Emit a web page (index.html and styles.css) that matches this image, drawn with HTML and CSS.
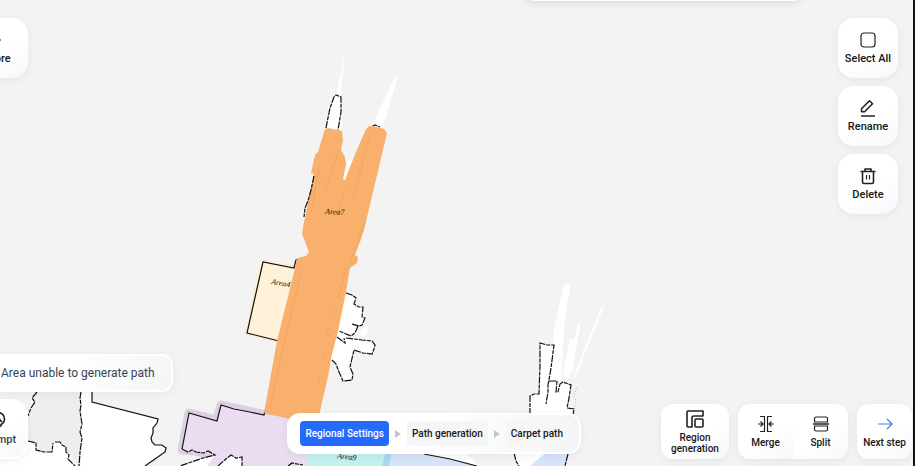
FILE: index.html
```
<!DOCTYPE html>
<html lang="en">
<head>
    <meta charset="UTF-8">
    <meta name="viewport" content="width=device-width, initial-scale=1.0">
    <title>Map Editor</title>
    <link rel="stylesheet" href="styles.css">
</head>
<body>
<div class="app">

    <!-- Scanned map -->
    <svg class="map" viewBox="0 0 913 466" preserveAspectRatio="xMinYMin slice" aria-hidden="true">
        <!-- rooms on the left -->
        <path class="grey" d="M37 385L32 402L35 407L28 416L20 430V441L28 441L36 444L36 451L52 452L53 443L60 442L80 466L82 424V385Z"/>
        <path class="free" d="M81 385V470H140L165 452L166 447L155 445L151 438L153 430L158 419L92 402V385ZM0 441H28L36 445V451L52 452L53 443L60 442L67 452L75 470H0Z"/>
        <path class="wall rough" d="M37 392L32 398L35 402L31 408L28 416M28 441L36 443V450L44 452L52 452L53 443M55 442H60L62 445L66 447V452L69 455L68 459L75 466M81 392L80 398L81 405L80 411L82 424L80 432L82 438L80 452L79 466"/>
        <path class="wall" d="M92 392V402L158 419L157 423L153 428L153 433L151 438L152 442L155 445H162L166 448L165 452L155 459L145 466"/>

        <!-- purple area -->
        <path class="purple-edge" d="M189 413L217 420L221 405L266 415L310 420V470H205L213 455L195 451L182 450Z"/>
        <path class="purple" d="M189 413L217 420L221 405L266 415L315 420V470H205L213 455L195 451L182 450Z"/>
        <path class="free" d="M180 466L203 458L214 456L205 470H180ZM218 466L230 456L242 457V470H215Z"/>
        <path class="wall" d="M182 449L189 413L217 421L221 405L234 409L250 412L264 415L265 411"/>
        <path class="wall rough" d="M182 449L188 452L192 450L196 452L204 453L208 451L215 455L203 458L180 466M218 466L226 459L231 455L236 458L242 457V466M288 466L292 463L303 465"/>

        <!-- cyan and blue areas -->
        <path class="cyan" d="M308 440H392L386 470H308Z"/>
        <path class="cyan-edge" d="M387 440H394L389 470H382Z"/>
        <path class="blue" d="M394 440L420 453L480 466V470H388Z"/>
        <path class="free" d="M420 440H455L482 470L477 466L424 454Z"/>
        <path class="wall" d="M424 454L450 459L477 466"/>

        <!-- room behind the steps bar -->
        <path class="free" d="M530 396L539 394L540 343L554 346L550 382L571 385L567 408L574 409L566 470H519L514 450L530 420Z"/>
        <path class="blue" d="M530 466L552 448H569L565 470H526Z"/>
        <path class="free" d="M563 288L566 284H569L570 289L565 318L561 380H551L554 330L557 315ZM570 338L573 338L569 378L562 378ZM579 322L580 327L572 372H567L573 342Z"/>
        <path class="ray" d="M603 306L590 338L574 378"/>
        <path class="wall rough" d="M530 415V396L534 394L539 394L540 365L540 343L547 345L554 345L551 368L548 385L548 392L546 404M549 381L557 381L556 392H558L560 384L563 382L571 385L569 398L567 408L574 409L573 415M514 453L516 461L519 466M568 454L565 466"/>
        <path class="noise" d="M577 388L574 396L576 402L574 410"/>

        <!-- small rooms beside the corridor -->
        <path class="free" d="M346 293L356 298L354 304L362 307L364 318L360 326L354 334L346 338L372 341L375 345L372 354L354 350L349 370L353 378L350 381L343 381L338 368L330 358L320 340Z"/>
        <path class="free" d="M362 328L368 326L367 335L359 336Z"/>
        <path class="wall rough" d="M346 293L352 295L356 298L354 304L359 307H363L362 317L365 318L362 325L359 326L352 324L358 326L355 333L351 336L339 331M337 337L345 343L344 338M346 338L362 340L372 341L375 345L374 349L372 354L363 353L354 350L350 367L353 374L352 380L343 381L339 372L336 364L332 360"/>

        <!-- yellow area -->
        <path class="yellow-edge" d="M263 262L295 268L310 262L290 343L247 333Z"/>
        <path class="yellow" d="M263 262L295 268L310 262L290 343L247 333Z"/>
        <path class="wall" d="M279 341L263 337L247 333L263 262L294 268L296 260L302 258"/>
        <text class="area-name" x="271" y="284" transform="rotate(10 271 284)">Area4</text>

        <!-- laser spikes above the corridor -->
        <path class="free" d="M345 52L342 80L341 97L342 130H326L330 104L337 92Z"/>
        <path class="free" d="M396 75L397 79L383 127H371L378 113Z"/>
        <path class="wall rough" d="M326 128L330 108L334 97L336 95L341 97L341 112L338 130M371 127L375 125L380 127"/>
        <path class="free" d="M343 176L348 160L354 160L345 184Z"/>

        <!-- orange area -->
        <path class="orange" d="M325 129L328 128L342 131L343 140L341 150L345 157L346 165L343 179L345 180L348 172L356 152L366 129L369 126L373 126L384 129L387 133L364 230L360 242L355 255L358 257L357 263L350 268L346 292L338 331L331 358L329 372L318 420L290 419L264 413L277 341L295 268L297 258L306 256L309 252L302 234L304 222L314 174L311 173L315 155L318 152Z"/>
        <path class="trace" d="M270 408L283 348L302 268M325 190L339 150M353 200L370 134M345 190L338 214M366 220L350 262M346 268L341 289L338 297M333 310L334 314M330 328A4 4 0 1 0 332 336M324 354V361M320 376L319 380M336 284L341 289M311 214L319 168"/>
        <path class="wall rough" d="M314 176L311 190L308 201L305 208L304 217"/>

        <text class="area-name" x="325" y="214" transform="rotate(3 325 214)">Area7</text>
        <text class="area-name" x="337" y="458" transform="rotate(8 337 458)">Area9</text>
    </svg>

    <div class="title-panel"></div>

    <header class="top-bar">
        <button class="tile cut-left" type="button">
            <svg class="icon" viewBox="0 0 18 18"><path d="M3 9h9"/></svg>
            <span>More</span>
        </button>

        <div class="side-tools">
            <button class="tile" type="button">
                <svg class="icon" viewBox="0 0 18 18"><rect x="2" y="2" width="14" height="14" rx="3"/></svg>
                <span>Select All</span>
            </button>
            <button class="tile" type="button">
                <svg class="icon" viewBox="0 0 18 18"><path class="bold" d="M2 17H16M2.500 12.800V9.800L10.500 1.800L13.500 4.800L5.500 12.800Z"/></svg>
                <span>Rename</span>
            </button>
            <button class="tile" type="button">
                <svg class="icon" viewBox="0 0 18 18"><path class="bold" d="M1.500 4.500H16.500M6 4.500V2H12V4.500M3.500 4.500V15Q3.500 16.500 5 16.500H13Q14.500 16.500 14.500 15V4.500"/><path d="M7.500 8V12.500M10.500 8V12.500"/></svg>
                <span>Delete</span>
            </button>
        </div>
    </header>

    <footer class="bottom-bar">
        <div class="hints">
            <div class="toast" role="status">Area unable to generate path</div>
            <button class="tile cut-left prompt" type="button">
                <svg class="icon" viewBox="0 0 18 18"><path class="bold" d="M6 14V12.500C4 11.500 2.500 9.500 2.500 7A6.500 6.500 0 0 1 15.500 7C15.500 9.500 14 11.500 12 12.500V14ZM7 17H11M13 10L10 7"/></svg>
                <span>Prompt</span>
            </button>
        </div>

        <nav class="steps">
            <button class="step active" type="button">Regional Settings</button>
            <i class="arrow"></i>
            <button class="step" type="button">Path generation</button>
            <i class="arrow"></i>
            <button class="step" type="button">Carpet path</button>
        </nav>

        <div class="actions">
            <button class="action region" type="button">
                <svg class="icon" viewBox="0 0 18 18"><path class="bold" d="M2 1H17V6H8Q6 6 6 8V17H2Q1 17 1 16V2Q1 1 2 1Z"/><rect class="bold" x="9" y="9" width="8" height="8" rx="1"/></svg>
                <span>Region generation</span>
            </button>
            <div class="action-group">
                <button class="action" type="button">
                    <svg class="icon" viewBox="0 0 18 18"><path d="M3 1.500H7.500V16.500H3M15 1.500H10.500V16.500H15M1 9H6M3.500 6.500L6 9L3.500 11.500M17 9H12M14.500 6.500L12 9L14.500 11.500"/></svg>
                    <span>Merge</span>
                </button>
                <button class="action" type="button">
                    <svg class="icon" viewBox="0 0 18 18"><path class="bold" d="M1 9H17"/><path d="M2.500 7V3.500Q2.500 2 4 2H14Q15.500 2 15.500 3.500V7ZM2.500 11V14.500Q2.500 16 4 16H14Q15.500 16 15.500 14.500V11Z"/></svg>
                    <span>Split</span>
                </button>
            </div>
            <button class="action next" type="button">
                <svg class="icon" viewBox="0 0 18 18"><path d="M2 9H16M11 4L16 9L11 14"/></svg>
                <span>Next step</span>
            </button>
        </div>
    </footer>

</div>
</body>
</html>
```
FILE: styles.css
```
* {
    box-sizing: border-box;
}

body {
    margin: 0;
    background: #0c1116;
    color: #15171a;
    font-family: Roboto, sans-serif;
    font-size: 11px;
}

button {
    margin: 0;
    padding: 0;
    border: none;
    color: inherit;
    font: inherit;
    font-weight: 500;
    cursor: pointer;
}

.app {
    position: relative;
    display: flex;
    flex-direction: column;
    justify-content: space-between;
    min-height: 100vh;
    margin-right: 2px;
    background: #f3f3f3;
    overflow: hidden;
}

/* Map */
.map {
    position: absolute;
    top: 0;
    left: 0;
    width: 100%;
    height: 100%;
}

.free { fill: #fff; }
.grey { fill: #eee; }
.purple { fill: #eaddf2; }
.purple-edge { fill: none; stroke: #dccfe3; stroke-width: 9; stroke-linejoin: round; }
.cyan { fill: #c3f1ee; }
.cyan-edge { fill: #a9d7ee; }
.blue { fill: #d5e4f9; }
.yellow { fill: #fff2d8; }
.yellow-edge { fill: none; stroke: #fbeed3; stroke-width: 5; stroke-linejoin: round; }
.orange { fill: #f8b06c; }

.wall {
    fill: none;
    stroke: #111;
    stroke-width: 1.2;
}

.rough { stroke-dasharray: 7 1 4 1; }

.ray {
    fill: none;
    stroke: #fff;
    stroke-width: 2;
}

.trace {
    fill: none;
    stroke: #f0a662;
    stroke-width: 1;
}

.noise {
    fill: none;
    stroke: #aaa;
    stroke-dasharray: 1 2;
}

.area-name {
    font-family: "Liberation Serif", serif;
    font-size: 8px;
    font-style: italic;
    fill: #111;
}

/* Panel that hangs in from the top edge */
.title-panel {
    position: absolute;
    top: -39px;
    left: 524px;
    width: 278px;
    height: 40px;
    border-radius: 10px;
    background: #fff;
    box-shadow: 0 1px 8px rgba(40, 40, 80, 0.15);
}

/* Buttons */
.icon {
    display: block;
    width: 18px;
    height: 18px;
    fill: none;
    stroke: #222;
    stroke-width: 1.2;
    stroke-linejoin: round;
}

.bold { stroke-width: 1.6; }

.tile,
.action {
    display: flex;
    flex-direction: column;
    align-items: center;
    justify-content: center;
    background: linear-gradient(150deg, #fff 55%, #f6f7f9);
    line-height: 12px;
}

.tile {
    gap: 4px;
    width: 60px;
    height: 60px;
    border-radius: 16px;
    box-shadow: 0 2px 8px rgba(0, 0, 0, 0.06);
}

.cut-left { margin-left: -32px; }

.top-bar {
    position: relative;
    display: flex;
    align-items: flex-start;
    justify-content: space-between;
    padding: 18px 15px 0 0;
}

.side-tools {
    display: flex;
    flex-direction: column;
    gap: 8px;
}

/* Bottom bar */
.bottom-bar {
    position: relative;
    display: flex;
    align-items: flex-end;
    padding: 0 1px 7px 0;
}

.hints {
    display: flex;
    flex-direction: column;
    align-items: flex-start;
    gap: 7px;
}

.toast {
    padding: 9px 16px 9px 0;
    border: 2px solid #fff;
    border-left: none;
    border-radius: 0 11px 11px 0;
    background: linear-gradient(100deg, #fff 40%, #f4f5f7);
    box-shadow: 0 2px 8px rgba(0, 0, 0, 0.06);
    color: #36454f;
    font-size: 12px;
    line-height: 16px;
    text-indent: 1px;
}

.prompt {
    border: 2px solid #fff;
    color: #36454f;
}

.steps {
    display: flex;
    align-items: center;
    gap: 6px;
    margin: 0 80px 5px auto;
    padding: 6px 11px;
    border: 2px solid #fff;
    border-radius: 13px;
    background: linear-gradient(100deg, #fff 50%, #f3f4f6);
    box-shadow: 0 2px 8px rgba(0, 0, 0, 0.06);
}

.step {
    height: 25px;
    padding: 0 5px;
    border-radius: 4px;
    background: #f6f6f7;
    font-size: 10px;
    white-space: nowrap;
}

.step.active {
    background: #246bfd;
    color: #fff;
}

.arrow {
    border: 4px solid transparent;
    border-left: 6px solid #c6c6c8;
    border-right: none;
}

.actions {
    display: flex;
    gap: 9px;
}

.action-group {
    display: flex;
    border-radius: 12px;
    overflow: hidden;
    box-shadow: 0 2px 8px rgba(0, 0, 0, 0.06);
}

.action {
    gap: 4px;
    width: 55px;
    height: 55px;
    font-size: 10px;
}

.region,
.next {
    border-radius: 12px;
    box-shadow: 0 2px 8px rgba(0, 0, 0, 0.06);
}

.region {
    width: 68px;
    padding: 0 6px;
    line-height: 11px;
}

.next .icon { stroke: #3f7fe0; }
```
